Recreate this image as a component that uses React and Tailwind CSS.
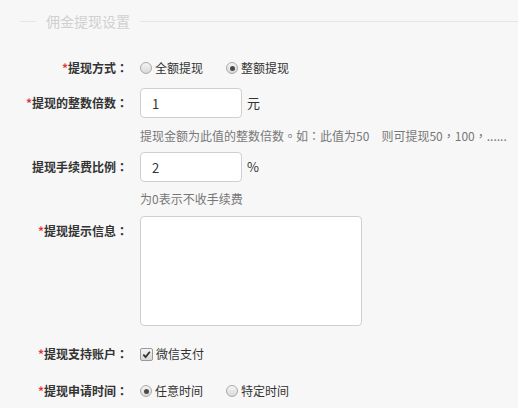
const font = { fontFamily: '"Noto Sans CJK SC", "Noto Sans", sans-serif' };
const tc = { fontFamily: '"Noto Sans CJK TC", "Noto Sans CJK SC", sans-serif' };

// centred full-width punctuation, as in the original font
function P({ children }) {
  return <span style={tc}>{children}</span>;
}

function Radio({ checked, label }) {
  return (
    <label className="flex items-center">
      <span className="flex h-[12px] w-[12px] items-center justify-center rounded-full border border-[#a9a9a9] bg-gradient-to-b from-[#f4f4f4] to-[#dadada]">
        {checked && <span className="h-[5px] w-[5px] rounded-full bg-[#4a4a4a]" />}
      </span>
      <span className="ml-[3px] text-[12px] text-[#333]">{label}</span>
    </label>
  );
}

function Checkbox({ checked, label }) {
  return (
    <label className="flex items-center">
      <span className="flex h-[13px] w-[13px] items-center justify-center rounded-[2px] border border-[#9a9a9a] bg-gradient-to-b from-[#f4f4f4] to-[#d8d8d8]">
        {checked && (
          <svg width="9" height="9" viewBox="0 0 10 10">
            <path d="M1.5 5.2 L4 7.8 L8.7 2" fill="none" stroke="#333" strokeWidth="2" />
          </svg>
        )}
      </span>
      <span className="ml-[3px] text-[12px] text-[#333]">{label}</span>
    </label>
  );
}

function Label({ required, text, top }) {
  return (
    <div className={`w-[128px] shrink-0 text-right text-[12px] font-bold text-[#333] ${top ? 'pt-[6px]' : ''}`}>
      {required && <span className="text-[#e4393c]">*</span>}
      {text}
      <P>：</P>
    </div>
  );
}

export default function App() {
  return (
    <div className="h-[408px] w-[518px] overflow-hidden bg-[#f7f7f7]" style={font}>
      <div className="mt-[11px] flex h-[21px] items-center">
        <div className="ml-[20px] h-px w-[16px] bg-[#e6e6e6]" />
        <span className="mx-[10px] text-[14px] text-[#d0d0d0]">佣金提现设置</span>
        <div className="h-px flex-1 bg-[#e6e6e6]" />
      </div>

      <div className="mt-[24px] flex h-[24px] items-center">
        <Label required text="提现方式" />
        <div className="ml-[12px] flex items-center gap-[23px]">
          <Radio label="全额提现" />
          <Radio checked label="整额提现" />
        </div>
      </div>

      <div className="mt-[8px] flex h-[30px] items-center">
        <Label required text="提现的整数倍数" />
        <input
          defaultValue="1"
          className="ml-[12px] h-[30px] w-[102px] rounded-[4px] border border-[#cfcfcf] bg-white px-[11px] text-[13px] text-[#333] outline-none"
        />
        <span className="ml-[5px] text-[13px] text-[#333]">元</span>
      </div>

      <div className="ml-[140px] mt-[9px] h-[18px] whitespace-nowrap text-[12px] leading-[18px] text-[#777]">
        提现金额为此值的整数倍数<P>。</P>如<P>：</P>此值为50　则可提现50<P>，</P>100<P>，</P>......
      </div>

      <div className="mt-[7px] flex h-[30px] items-center">
        <Label text="提现手续费比例" />
        <input
          defaultValue="2"
          className="ml-[12px] h-[30px] w-[102px] rounded-[4px] border border-[#cfcfcf] bg-white px-[11px] text-[13px] text-[#333] outline-none"
        />
        <span className="ml-[5px] text-[13px] text-[#333]">%</span>
      </div>

      <div className="ml-[140px] mt-[8px] h-[18px] text-[12px] leading-[18px] text-[#777]">
        为0表示不收手续费
      </div>

      <div className="mt-[8px] flex items-start">
        <Label required top text="提现提示信息" />
        <textarea className="ml-[12px] h-[110px] w-[222px] resize-none rounded-[4px] border border-[#cfcfcf] bg-white outline-none" />
      </div>

      <div className="mt-[18px] flex h-[20px] items-center">
        <Label required text="提现支持账户" />
        <div className="ml-[12px]">
          <Checkbox checked label="微信支付" />
        </div>
      </div>

      <div className="mt-[17px] flex h-[20px] items-center">
        <Label required text="提现申请时间" />
        <div className="ml-[12px] flex items-center gap-[23px]">
          <Radio checked label="任意时间" />
          <Radio label="特定时间" />
        </div>
      </div>
    </div>
  );
}
